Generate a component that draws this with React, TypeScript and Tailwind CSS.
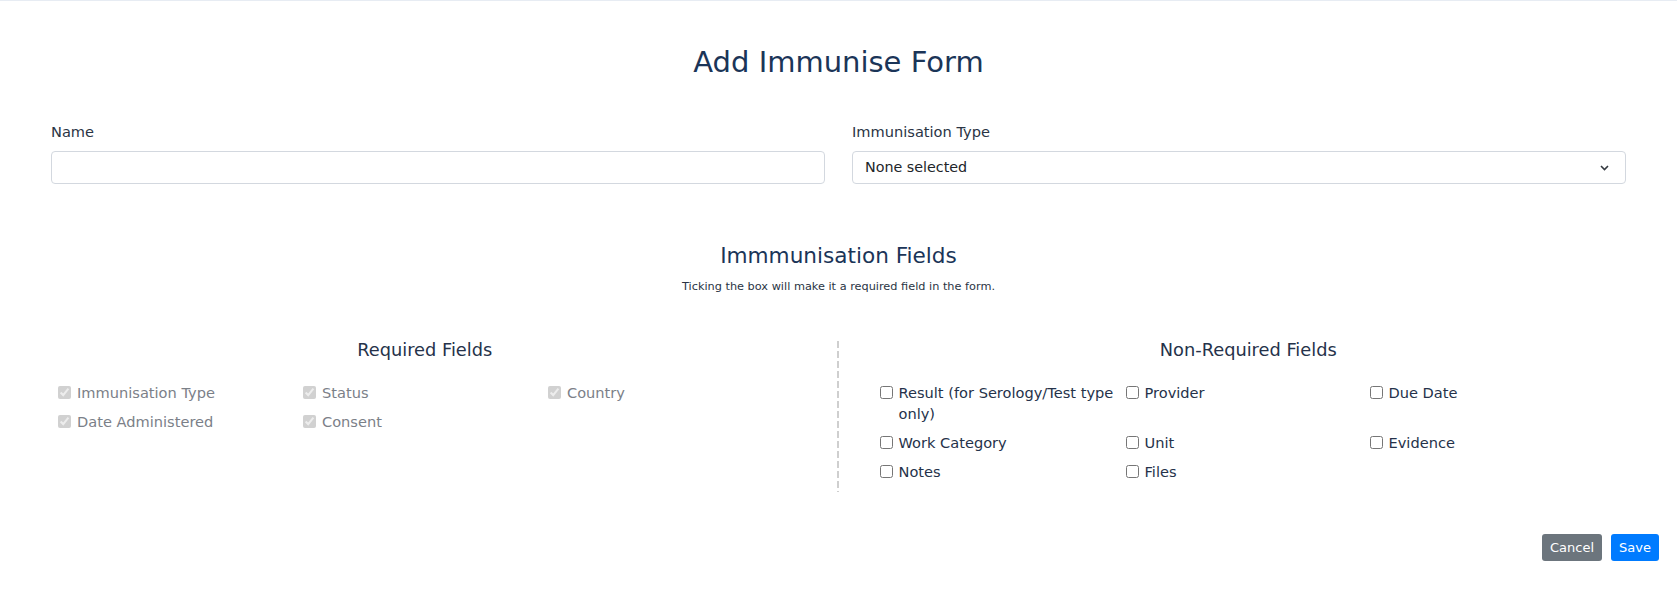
import { FC } from "react";

interface IField {
  label: string;
}

const requiredFields: IField[] = [
  { label: "Immunisation Type" },
  { label: "Status" },
  { label: "Country" },
  { label: "Date Administered" },
  { label: "Consent" },
];

const optionalFields: IField[] = [
  { label: "Result (for Serology/Test type only)" },
  { label: "Provider" },
  { label: "Due Date" },
  { label: "Work Category" },
  { label: "Unit" },
  { label: "Evidence" },
  { label: "Notes" },
  { label: "Files" },
];

const CheckItem: FC<{ label: string; locked?: boolean }> = ({ label, locked }) => (
  <label
    className={`flex items-start gap-[6px] text-[14.6px] leading-[21px] ${
      locked ? "text-[#7b8088]" : "text-[#25324a]"
    }`}
  >
    <input
      type="checkbox"
      className="mt-[4px] h-[13px] w-[13px] shrink-0"
      defaultChecked={locked}
      disabled={locked}
    />
    <span className="pr-[4px]">{label}</span>
  </label>
);

const App: FC = () => {
  return (
    <div
      className="min-h-[593px] w-full bg-white border-t border-[#e7ecf3]"
      style={{ fontFamily: "'DejaVu Sans', 'Noto Sans', sans-serif" }}
    >
      <h1 className="pt-[42px] text-center text-[29px] leading-[38px] text-[#1b3558]">
        Add Immunise Form
      </h1>

      <div className="mt-[40px] grid grid-cols-2 gap-[27px] px-[51px]">
        <div>
          <label className="mb-[9px] block text-[14.6px] leading-[21px] text-[#2a3444]">Name</label>
          <input
            type="text"
            className="h-[33px] w-full rounded-[4px] border border-[#d3d8df] px-3 text-[14px] outline-none"
          />
        </div>
        <div>
          <label className="mb-[9px] block text-[14.6px] leading-[21px] text-[#2a3444]">
            Immunisation Type
          </label>
          <div className="flex h-[33px] w-full items-center justify-between rounded-[4px] border border-[#d3d8df] pl-[12px] pr-[16px] text-[14.3px] text-[#212529]">
            <span>None selected</span>
            <svg width="9" height="6" viewBox="0 0 9 6" fill="none">
              <path d="M1 1l3.5 3.5L8 1" stroke="#343a40" strokeWidth="1.6" />
            </svg>
          </div>
        </div>
      </div>

      <div className="mt-[57px] text-center">
        <h2 className="text-[21.6px] leading-[30px] text-[#1b3558]">Immmunisation Fields</h2>
        <p className="mt-[8px] text-[11.3px] leading-[15px] text-[#2a3444]">
          Ticking the box will make it a required field in the form.
        </p>
      </div>

      <div className="mt-[46px] grid grid-cols-2 pl-[13px] pr-[17px]">
        <div className="pb-[10px]">
          <h3 className="text-center text-[17.8px] leading-[20px] text-[#25324a]">Required Fields</h3>
          <div className="mt-[22px] grid grid-cols-[245px_245px_245px] gap-y-[8px] pl-[45px]">
            {requiredFields.map((f) => (
              <CheckItem key={f.label} label={f.label} locked />
            ))}
          </div>
        </div>
        <div className="bg-[linear-gradient(#cfcfcf_70%,transparent_0)] bg-[length:2px_10px] bg-left bg-repeat-y pb-[10px]">
          <h3 className="text-center text-[17.8px] leading-[20px] text-[#25324a]">Non-Required Fields</h3>
          <div className="mt-[22px] grid grid-cols-[246px_244px_245px] gap-y-[8px] pl-[43px]">
            {optionalFields.map((f) => (
              <CheckItem key={f.label} label={f.label} />
            ))}
          </div>
        </div>
      </div>

      <div className="mt-[42px] flex justify-end gap-[9px] pr-[18px]">
        <button className="h-[27px] rounded-[3px] bg-[#6c757d] px-[8px] text-[13px] text-white">
          Cancel
        </button>
        <button className="h-[27px] rounded-[3px] bg-[#007bff] px-[8px] text-[13px] text-white">
          Save
        </button>
      </div>
    </div>
  );
};

export default App;
